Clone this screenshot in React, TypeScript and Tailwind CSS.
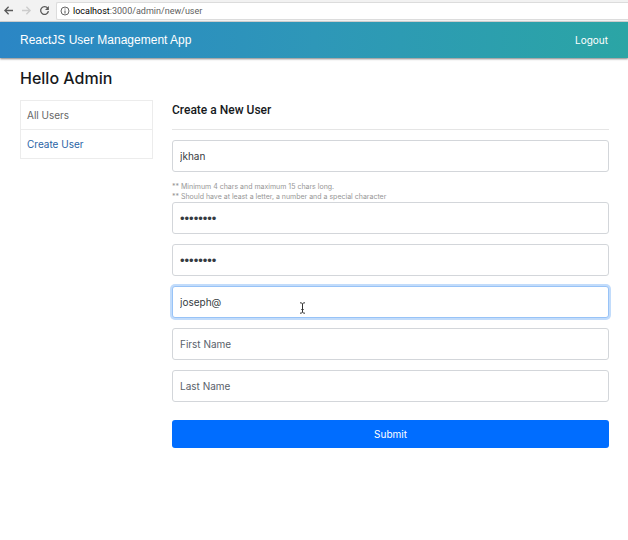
import React from "react";

const fieldBase =
  "block h-8 w-full rounded-[3px] border bg-white px-[7px] text-[#353b41] placeholder:text-[#59616a] placeholder:opacity-100 outline-none";

type FieldProps = {
  label: string;
  type?: string;
  value?: string;
  active?: boolean;
};

function Field({ label, type = "text", value, active = false }: FieldProps) {
  const border = active ? "border-[#98c3f7] ring-2 ring-[#c2dcfb]" : "border-[#d3d6da]";
  const text =
    type === "password"
      ? "font-['Liberation_Sans',sans-serif] text-[13px]"
      : "font-[Inter,sans-serif] text-[10px]";
  return (
    <input
      aria-label={label}
      placeholder={label}
      type={type}
      defaultValue={value}
      className={`${fieldBase} ${border} ${text}`}
    />
  );
}

function BrowserBar() {
  return (
    <div className="flex h-[22px] items-center border-b border-[#d4d4d4] bg-[#f2f2f2]">
      <div className="flex w-14 items-center gap-[7px] pl-[3px]">
        <button type="button" aria-label="Back" className="text-[#5a5a5a]">
          <svg width="11" height="11" viewBox="0 0 11 11" fill="none" stroke="currentColor" strokeWidth="1.3">
            <path d="M10 5.5H2M5.6 1.8 1.9 5.5l3.7 3.7" />
          </svg>
        </button>
        <button type="button" aria-label="Forward" className="text-[#cccccc]">
          <svg width="11" height="11" viewBox="0 0 11 11" fill="none" stroke="currentColor" strokeWidth="1.3">
            <path d="M1 5.5h8M5.4 1.8l3.7 3.7-3.7 3.7" />
          </svg>
        </button>
        <button type="button" aria-label="Reload" className="text-[#5a5a5a]">
          <svg width="11" height="11" viewBox="0 0 11 11" fill="none" stroke="currentColor" strokeWidth="1.3">
            <path d="M8.7 3.2A3.9 3.9 0 1 0 9.4 6.2" />
            <path d="M9.9 1v3.9H6z" fill="currentColor" stroke="none" />
          </svg>
        </button>
      </div>
      <div className="flex h-[18px] flex-1 items-center gap-[3px] rounded-l-[2px] border border-r-0 border-[#dcdcdc] bg-white pl-[3px]">
        <svg width="10" height="10" viewBox="0 0 10 10" fill="none" stroke="#666666">
          <circle cx="5" cy="5" r="4" />
          <path d="M5 4.4v3M5 2.4v1.1" strokeWidth="1.1" />
        </svg>
        <span className="font-[Roboto,sans-serif] text-[9px] leading-4 text-[#606060]">
          <span className="text-black">localhost</span>:3000/admin/new/user
        </span>
      </div>
    </div>
  );
}

function TextCursor() {
  return (
    <svg
      aria-hidden="true"
      className="pointer-events-none absolute top-4 left-[29%] h-3 w-[7px]"
      viewBox="0 0 7 12"
      fill="none"
      stroke="#333333"
    >
      <path d="M1 .8c1.400 0 2.500.4 2.500 1.400C3.500 1.200 4.600.8 6 .8M3.500 2v8M1 11.200c1.400 0 2.500-.4 2.500-1.400 0 1 1.100 1.400 2.500 1.400M2.300 7.500h2.400" />
    </svg>
  );
}

export default function App() {
  return (
    <div className="min-h-screen bg-white font-[Inter,sans-serif] text-[#16191c]">
      <BrowserBar />
      <header className="flex h-9 items-center justify-between bg-linear-to-r from-[#2b86c5] via-[#2e97b8] to-[#2ba5a5] px-5 text-white shadow-[0_1px_2px_rgba(0,0,0,0.5)]">
        <a href="#home" className="font-['Liberation_Sans',sans-serif] text-[12px] leading-4">
          ReactJS User Management App
        </a>
        <a href="#logout" className="text-[10px] leading-4">
          Logout
        </a>
      </header>

      <main className="pt-2 pr-[19px] pl-5">
        <h1 className="text-[16px] leading-6 font-medium">Hello Admin</h1>
        <div className="mt-[10px] flex gap-[19px]">
          <nav className="w-[133px] shrink-0 self-start border border-[#ececec] text-[10px] leading-7">
            <a href="#users" className="block border-b border-[#ececec] px-[6px] text-[#666666]">
              All Users
            </a>
            <a href="#create" className="block px-[6px] text-[#2a64a5]">
              Create User
            </a>
          </nav>

          <section className="min-w-0 flex-1">
            <h2 className="border-b border-[#e5e5e5] pb-[9px] font-[Roboto,sans-serif] text-[12px] leading-5 font-medium">
              Create a New User
            </h2>
            <form className="mt-[10px]" onSubmit={(event) => event.preventDefault()}>
              <Field label="Username" value="jkhan" />
              <p className="mt-[10px] text-[7px] leading-[10px] text-[#969696]">
                ** Minimum 4 chars and maximum 15 chars long.
                <br />
                ** Should have at least a letter, a number and a special character
              </p>
              <div className="flex flex-col gap-[10px]">
                <Field label="Password" type="password" value="password" />
                <Field label="Confirm Password" type="password" value="password" />
                <div className="relative">
                  <Field label="Email" value="joseph@" active />
                  <TextCursor />
                </div>
                <Field label="First Name" />
                <Field label="Last Name" />
              </div>
              <button
                type="submit"
                className="mt-[18px] h-7 w-full rounded-[3px] bg-[#006dff] text-[10px] text-white"
              >
                Submit
              </button>
            </form>
          </section>
        </div>
      </main>
    </div>
  );
}
